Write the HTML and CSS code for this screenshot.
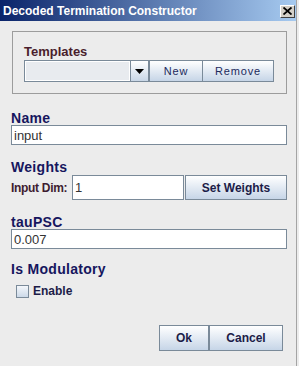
FILE: index.html
```html
<!DOCTYPE html>
<html lang="en">
<head>
  <meta charset="UTF-8">
  <title>Decoded Termination Constructor</title>
  <link rel="stylesheet" href="styles.css">
</head>
<body>
  <div class="window">
    <div class="titlebar">
      <span class="title">Decoded Termination Constructor</span>
      <span class="close-btn">
        <svg width="9" height="8" viewBox="0 0 9 8"><path d="M0.5 0.5 L8.5 7.5 M8.5 0.5 L0.5 7.5" stroke="#000" stroke-width="1.8"/></svg>
      </span>
    </div>

    <div class="content">
      <div class="group">
        <div class="group-label">Templates</div>
        <div class="combo-row">
          <div class="combo">
            <div class="combo-field"></div>
            <div class="combo-arrow">
              <svg width="9" height="5" viewBox="0 0 9 5"><path d="M0 0 H9 L4.5 5 Z" fill="#000"/></svg>
            </div>
          </div>
          <button class="btn btn-plain btn-new">New</button>
          <button class="btn btn-plain btn-remove">Remove</button>
        </div>
      </div>

      <div class="field-label name-label">Name</div>
      <input class="text-input" type="text" value="input">

      <div class="field-label weights-label">Weights</div>
      <div class="weights-row">
        <span class="dim-label">Input Dim:</span>
        <input class="text-input dim-input" type="text" value="1">
        <button class="btn btn-set">Set Weights</button>
      </div>

      <div class="field-label tau-label">tauPSC</div>
      <input class="text-input tau-input" type="text" value="0.007">

      <div class="field-label mod-label">Is Modulatory</div>
      <div class="check-row">
        <span class="checkbox"></span>
        <span class="check-text">Enable</span>
      </div>

      <div class="actions">
        <button class="btn btn-ok">Ok</button>
        <button class="btn btn-cancel">Cancel</button>
      </div>
    </div>
  </div>
</body>
</html>
```

FILE: styles.css
```css
html, body {
  margin: 0;
  padding: 0;
  background-color: #ececec;
}

body {
  font-family: "Liberation Sans", Arial, sans-serif;
  color: #1c1c5c;
}

.window {
  width: 296px;
  height: 366px;
  border-right: 1px solid #a4a4a4;
  background-color: #ececec;
  display: flex;
  flex-direction: column;
}

.titlebar {
  height: 21px;
  flex: none;
  display: flex;
  align-items: center;
  justify-content: space-between;
  padding: 0 1px 0 3px;
  background: linear-gradient(to right, #0a246a, #a6caf0);
}

.title {
  color: #fff;
  font-weight: bold;
  font-size: 12px;
}

.close-btn {
  width: 13px;
  height: 11px;
  margin-top: 1px;
  background-color: #d4d0c8;
  border: 1px solid;
  border-color: #fff #404040 #404040 #fff;
  display: flex;
  align-items: center;
  justify-content: center;
}

.content {
  flex: 1;
  display: flex;
  flex-direction: column;
  width: 276px;
  padding: 10px 0 15px 11px;
}

.group {
  margin-left: 1px;
  border: 1px solid #9c9c9c;
  padding: 12px 0 0 11px;
  box-sizing: border-box;
  height: 63px;
}

.group-label {
  font-size: 13px;
  font-weight: bold;
  line-height: 15px;
  color: #4a1e2c;
  margin-bottom: 1px;
}

.combo-row {
  display: flex;
  height: 22px;
}

.combo {
  display: flex;
  width: 125px;
  box-sizing: border-box;
  border: 1px solid #7a8a99;
}

.combo-field {
  flex: 1;
  background-color: #e8ebef;
  border: 1px solid #fff;
}

.combo-arrow {
  width: 17px;
  border-left: 1px solid #7a8a99;
  background: linear-gradient(#ffffff, #c8d6e6);
  display: flex;
  align-items: center;
  justify-content: center;
}

.btn {
  font-family: "Liberation Sans", Arial, sans-serif;
  font-size: 12px;
  font-weight: bold;
  color: #1c1c48;
  border: 1px solid #7a8a99;
  background: linear-gradient(#ffffff, #c6d5e7);
  padding: 0;
  box-sizing: border-box;
}

.btn-plain {
  font-weight: normal;
  font-size: 11px;
  letter-spacing: 0.8px;
  color: #1c2a5c;
  height: 22px;
}

.btn-new {
  width: 54px;
}

.btn-remove {
  width: 72px;
  margin-left: -1px;
}

.field-label {
  font-size: 14px;
  font-weight: bold;
  line-height: 14px;
  letter-spacing: 0.3px;
  color: #16165e;
}

.name-label {
  margin-top: 17px;
}

.weights-label,
.tau-label {
  margin-top: 15px;
}

.mod-label {
  margin-top: 13px;
}

.text-input {
  display: block;
  width: 276px;
  height: 20px;
  box-sizing: border-box;
  border: 1px solid #7a8a99;
  background-color: #fff;
  font-family: "Liberation Sans", Arial, sans-serif;
  font-size: 13px;
  color: #333;
  padding: 0 2px;
  margin: 0;
}

.weights-row {
  display: flex;
  align-items: center;
  height: 25px;
  margin-top: 1px;
}

.dim-label {
  font-size: 12px;
  font-weight: bold;
  color: #3e1c30;
  letter-spacing: -0.3px;
  width: 61px;
}

.dim-input {
  width: 112px;
  height: 25px;
}

.btn-set {
  width: 102px;
  height: 25px;
  margin-left: 1px;
  font-size: 12px;
}

.check-row {
  display: flex;
  align-items: center;
  margin-top: 8px;
  padding-left: 5px;
}

.checkbox {
  width: 11px;
  height: 11px;
  border: 1px solid #7a8a99;
  background: linear-gradient(#f4f7fb, #ccd9e8);
}

.check-text {
  margin-left: 4px;
  font-size: 12px;
  font-weight: bold;
  color: #1c1c48;
}

.actions {
  margin-top: auto;
  margin-right: 4px;
  display: flex;
  justify-content: flex-end;
}

.btn-ok {
  width: 50px;
  height: 26px;
}

.btn-cancel {
  width: 74px;
  height: 26px;
}
```
